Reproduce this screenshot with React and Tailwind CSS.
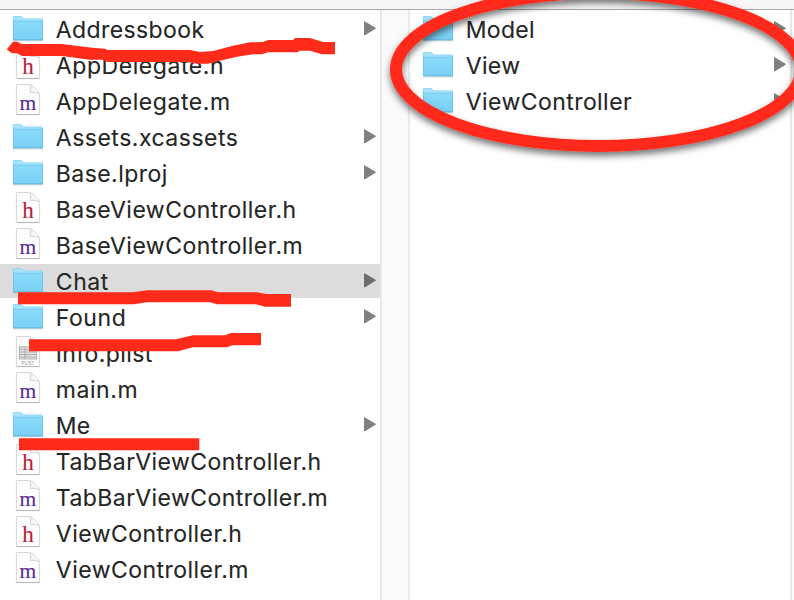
import React from "react";

const FILES = [
  { name: "Addressbook", kind: "folder", track: "tracking-[0.4px]" },
  { name: "AppDelegate.h", kind: "h", track: "tracking-[0.57px]" },
  { name: "AppDelegate.m", kind: "m", track: "tracking-[0.57px]" },
  { name: "Assets.xcassets", kind: "folder", track: "tracking-[0.5px]" },
  { name: "Base.lproj", kind: "folder", track: "tracking-[0.45px]" },
  { name: "BaseViewController.h", kind: "h", track: "tracking-[0.47px]" },
  { name: "BaseViewController.m", kind: "m", track: "tracking-[0.47px]" },
  { name: "Chat", kind: "folder", track: "tracking-[0.55px]", selected: true },
  { name: "Found", kind: "folder", track: "tracking-[0.55px]" },
  { name: "Info.plist", kind: "plist", track: "tracking-[0.4px]" },
  { name: "main.m", kind: "m", track: "tracking-[0.55px]" },
  { name: "Me", kind: "folder", track: "tracking-[0.25px]" },
  { name: "TabBarViewController.h", kind: "h", track: "tracking-[0.45px]" },
  { name: "TabBarViewController.m", kind: "m", track: "tracking-[0.45px]" },
  { name: "ViewController.h", kind: "h", track: "tracking-[0.47px]" },
  { name: "ViewController.m", kind: "m", track: "tracking-[0.47px]" },
];

const CHAT = [
  { name: "Model", kind: "folder", track: "tracking-[0.3px]" },
  { name: "View", kind: "folder", track: "tracking-[0.3px]" },
  { name: "ViewController", kind: "folder", track: "tracking-[0.43px]" },
];

function Folder() {
  return (
    <svg className="h-[34px] w-8 shrink-0" viewBox="0 0 32 34">
      <path d="M1 28.9H31" stroke="#000" strokeOpacity=".16" />
      <path d="M1 28V5Q1 4.2 1.8 4.2H8.5Q9.3 4.2 10 5L11.3 6.2Q11.8 6.7 12.6 6.7H30.2Q31 6.7 31 7.5V28Z" fill="#a5e2fc" />
      <path d="M1.2 8V5Q1.2 4.5 1.8 4.5H8.5Q9.3 4.5 10 5.2L11.3 6.4Q11.8 6.9 12.6 6.9H30.6" fill="none" stroke="#82cdec" strokeWidth=".6" />
      <path d="M1 9.3H31V27.6Q31 28.2 30.4 28.2H1.6Q1 28.2 1 27.6Z" fill="url(#folderFace)" />
      <path d="M1 9.2H31" stroke="#6fc6ea" strokeWidth=".8" />
      <path d="M1.4 8V28M30.6 8V28" stroke="#68bde2" strokeWidth=".7" />
      <path d="M1 27.9H31" stroke="#62b0d2" strokeWidth=".9" />
    </svg>
  );
}

function Doc({ kind }) {
  return (
    <svg className="h-[34px] w-8 shrink-0" viewBox="0 0 32 34">
      <path d="M4.4 1.2Q4.4.5 5.1.5H17.5Q20 .8 23.4 4.2Q27.4 7.5 27.6 10.5V29.8Q27.6 30.5 26.9 30.5H5.1Q4.4 30.5 4.4 29.8Z" fill="#fdfdfd" stroke="#cfcfcf" strokeWidth=".9" />
      <path d="M4.5 30.6H27.5" stroke="#b4b4b4" />
      <path d="M17.8.8Q19 2 18.6 8.6Q24.5 7.6 27.3 10" fill="#f4f4f4" stroke="#cfcfcf" strokeWidth=".9" />
      {kind === "plist" ? (
        <g>
          <path d="M7 10.5H17.5V13H25V23H7Z" fill="#e2e2e2" />
          <path d="M7 11H17M7 13.5H25M7 16H25M7 18.5H25M7 21H25M7 23H25M7.4 10.5V23M13 10.5V23M24.6 13V23" stroke="#a4a4a4" strokeWidth=".8" fill="none" />
          <text x="16" y="28.6" textAnchor="middle" className="fill-[#999] font-['Liberation_Sans',sans-serif] text-[4.6px]">PLIST</text>
        </g>
      ) : (
        <text
          x="15.9"
          y="26"
          textAnchor="middle"
          strokeWidth=".15"
          className={
            kind === "h"
              ? "fill-[#bb1f3a] stroke-[#bb1f3a] font-['Liberation_Serif',serif] text-[23px]"
              : "fill-[#5a2d91] stroke-[#5a2d91] font-['Liberation_Serif',serif] text-[21.5px]"
          }
        >
          {kind}
        </text>
      )}
    </svg>
  );
}

function Row({ item }) {
  return (
    <li className={item.selected ? "flex h-[34px] items-center bg-[#dcdcdc] pl-3" : "flex h-[34px] items-center pl-3"}>
      {item.kind === "folder" ? <Folder /> : <Doc kind={item.kind} />}
      <span className={"ml-[11.8px] flex-1 whitespace-nowrap pt-0.5 text-[23px] leading-[34px] text-[#262626] [-webkit-text-stroke:0.12px_#262626] " + item.track}>{item.name}</span>
      {item.kind === "folder" && (
        <svg className="mr-1 h-[34px] w-3 shrink-0" viewBox="0 0 12 34">
          <path d="M.7 10L11.2 16.2L.7 22.7Z" fill={item.selected ? "#6d6d6d" : "#808080"} stroke={item.selected ? "#6d6d6d" : "#808080"} strokeWidth="1.3" strokeLinejoin="round" />
        </svg>
      )}
    </li>
  );
}

function Column({ items, className }) {
  return (
    <ul className={"flex shrink-0 flex-col gap-0.5 bg-white pt-0.5 " + className}>
      {items.map((item) => (
        <Row key={item.name} item={item} />
      ))}
    </ul>
  );
}

function Markup() {
  return (
    <svg className="pointer-events-none absolute inset-0" width="794" height="600" viewBox="0 0 794 600">
      <defs>
        <linearGradient id="folderFace" x1="0" y1="0" x2="0" y2="1">
          <stop offset="0" stopColor="#8bdafa" />
          <stop offset="1" stopColor="#78d0f5" />
        </linearGradient>
        <filter id="ringShadow" x="-10%" y="-20%" width="120%" height="150%">
          <feDropShadow dx="0" dy="4" stdDeviation="3.5" floodColor="#000" floodOpacity=".55" />
        </filter>
      </defs>
      <ellipse cx="598.6" cy="69.5" rx="202.6" ry="76.5" fill="none" stroke="#ff2b1a" strokeWidth="12" filter="url(#ringShadow)" />
      <g fill="#ff2b1a">
        <path d="M6.7 49.5L13 41.7H17L21.7 44H62L92 47.7L105 48.7L107.5 50H190L200 52L213 51L233 45.7L250 42.3L263 42L268 40H293L295 38H310L323 42H335V54.3H322L310 50.7H300L297.5 52.3H268L262 54.3H253L237 56.7L223 60L210 63.3L208 63.7H197L187 62H107.5L103 59.7H90L62 56H22L17 53.3H12Z" />
        <path d="M18 292.3H133L147 290.3H211L218 292.3H257L266 294H291V306.7H265L256 304.3H217L210 302.3H147L134 304.3H18Z" />
        <path d="M29 339.3H176L193 335.3H225L231 333H261V345.3H232L227 347.3H193L178 351.3H29Z" />
        <path d="M19 438.3H199.3V450.3H19Z" />
      </g>
    </svg>
  );
}

export default function App() {
  return (
    <div className="relative flex h-[600px] w-[794px] flex-col overflow-hidden bg-white font-['Inter','Liberation_Sans',sans-serif]">
      <div className="h-[10px] shrink-0 border-b border-[#a9a9a9] bg-[#f6f6f6]" />
      <div className="flex min-h-0 flex-1">
        <Column items={FILES} className="w-[380px]" />
        <div className="w-[30px] shrink-0 border-x-2 border-l-[#e7e7e7] border-r-[#ebebeb] bg-[#fafafa]" />
        <Column items={CHAT} className="w-[380px]" />
        <div className="w-1 shrink-0 border-l-2 border-[#e7e7e7] bg-[#fafafa]" />
      </div>
      <Markup />
    </div>
  );
}
